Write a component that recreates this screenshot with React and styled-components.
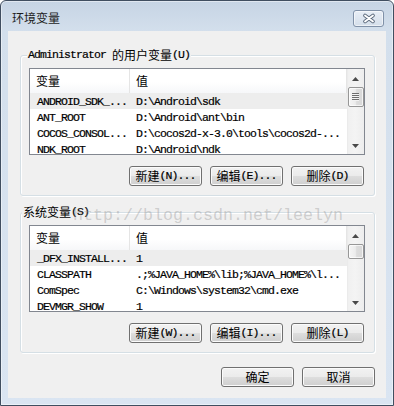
import React from 'react';
import styled, { createGlobalStyle } from 'styled-components';

const Global = createGlobalStyle`
  html, body { margin: 0; padding: 0; background: #ffffff; }
  body { width: 394px; height: 406px; overflow: hidden; }
  * { box-sizing: border-box; }
`;

const Window = styled.div`
  position: relative;
  width: 394px;
  height: 406px;
  border: 1px solid #404e60;
  border-radius: 6px 6px 0 0;
  background: linear-gradient(#c6d4e4 0px, #d3dfec 30px, #dae5f2 100%);
  box-shadow: inset 0 0 0 1px rgba(255, 255, 255, 0.45);
  display: flex;
  flex-direction: column;
  font-family: "Noto Sans CJK SC", sans-serif;
  font-size: 12px;
  color: #000;
  overflow: hidden;
`;

const TitleBar = styled.div`
  height: 30px;
  flex: none;
  display: flex;
  align-items: flex-start;
  justify-content: space-between;
  padding: 0 9px 0 11px;
`;

const Title = styled.div`
  margin-top: 9px;
  line-height: 16px;
  font-size: 12px;
  color: #1c1c1c;
`;

const CloseButton = styled.div`
  margin-top: 9px;
  width: 31px;
  height: 17px;
  border: 1px solid #8091a8;
  border-radius: 3px;
  background: linear-gradient(#e8eef6, #d4deea);
  box-shadow: inset 0 0 0 1px rgba(255, 255, 255, 0.55);
  display: flex;
  align-items: center;
  justify-content: center;
`;

const Client = styled.div`
  flex: 1;
  margin: 0 7px 7px;
  background: #f0f0f0;
  padding: 24px 11px 11px 12px;
  display: flex;
  flex-direction: column;
`;

const Group = styled.div`
  height: 141px;
  flex: none;
  margin-top: ${(p) => p.$gap || 0}px;
  border: 1px solid #d5dfe5;
  border-radius: 3px;
  box-shadow: inset 1px 1px 0 #ffffff, 1px 1px 0 #ffffff;
  padding: 0 9px 0 8px;
  display: flex;
  flex-direction: column;
`;

const GroupLabel = styled.div`
  align-self: flex-start;
  margin: -8px 0 0 ${(p) => p.$indent}px;
  padding: 0 1px;
  height: 14px;
  line-height: 14px;
  background: #f0f0f0;
  white-space: nowrap;
  display: flex;
  align-items: center;
`;

const Latin = styled.span`
  font-family: "Liberation Mono", monospace;
  font-size: 11.5px;
  letter-spacing: -0.9px;
  -webkit-text-stroke: 0.2px #000;
`;

const ListView = styled.div`
  margin-top: 6px;
  height: 87px;
  flex: none;
  border: 1px solid #828790;
  background: #ffffff;
  display: flex;
  overflow: hidden;
`;

const ListBody = styled.div`
  flex: 1;
  display: flex;
  flex-direction: column;
  overflow: hidden;
`;

const Header = styled.div`
  height: 24px;
  flex: none;
  display: flex;
  background: linear-gradient(#ffffff 0%, #ffffff 55%, #f6f7f9 100%);
  border-right: 1px solid #e5e5e5;
`;

const HeaderCell = styled.div`
  width: ${(p) => (p.$first ? '100px' : 'auto')};
  flex: ${(p) => (p.$first ? 'none' : '1')};
  padding-left: 6px;
  border-right: ${(p) => (p.$first ? '1px solid #e5e5e5' : 'none')};
  line-height: 24px;
  font-size: 12px;
  color: #000;
`;

const Row = styled.div`
  height: 16px;
  flex: none;
  display: flex;
  align-items: center;
  background: ${(p) => (p.$selected ? '#ededed' : 'transparent')};
  white-space: nowrap;
`;

const Cell = styled.div`
  width: ${(p) => (p.$first ? '100px' : 'auto')};
  flex: ${(p) => (p.$first ? 'none' : '1')};
  padding-left: ${(p) => (p.$first ? 7 : 6)}px;
  line-height: 16px;
  overflow: hidden;
`;

const ScrollBar = styled.div`
  width: 17px;
  flex: none;
  display: flex;
  flex-direction: column;
  background: linear-gradient(to right, #e6e6e6 0px, #f0f0f0 1px, #f4f4f4 8px, #eeeeee 16px);
`;

const ArrowButton = styled.div`
  height: 17px;
  flex: none;
  display: flex;
  align-items: center;
  justify-content: center;
  padding-top: ${(p) => (p.$up ? 2 : 0)}px;
`;

const Track = styled.div`
  flex: 1;
  display: flex;
  flex-direction: column;
  align-items: center;
`;

const Thumb = styled.div`
  margin-top: 1px;
  width: 16px;
  height: ${(p) => p.$size}px;
  border: 1px solid #979797;
  border-radius: 2px;
  background: linear-gradient(to right, #f5f5f5 0%, #ececec 45%, #dcdcdc 55%, #d8d8d8 100%);
  box-shadow: inset 0 0 0 1px rgba(255, 255, 255, 0.7);
  display: flex;
  align-items: center;
  justify-content: center;
`;

const Grip = styled.div`
  width: 7px;
  height: 8px;
  background: repeating-linear-gradient(#6d6d6d 0px, #6d6d6d 1px, #f2f2f2 1px, #f2f2f2 2px);
`;

const ButtonRow = styled.div`
  margin-top: ${(p) => p.$gap}px;
  padding-right: ${(p) => p.$pad || 0}px;
  display: flex;
  justify-content: flex-end;
  gap: 8px;
`;

const Button = styled.div`
  width: 73px;
  height: 20px;
  border: 1px solid #707070;
  border-radius: 3px;
  background: linear-gradient(#f2f2f2 0%, #ebebeb 48%, #dddddd 52%, #cfcfcf 100%);
  box-shadow: inset 0 0 0 1px #fbfbfb;
  display: flex;
  align-items: center;
  justify-content: center;
  white-space: nowrap;
  line-height: 16px;
  font-size: 12px;
  color: #000;
`;

const Watermark = styled.div`
  position: absolute;
  left: 72px;
  top: 206px;
  font-family: "Liberation Mono", monospace;
  font-size: 16.67px;
  line-height: 17px;
  color: rgba(150, 150, 150, 0.4);
  white-space: nowrap;
  pointer-events: none;
`;

const UpArrow = () => (
  <svg width="7" height="4" viewBox="0 0 7 4">
    <path d="M3.5 0 L7 4 L0 4 Z" fill="#4a4a4a" />
  </svg>
);

const DownArrow = () => (
  <svg width="7" height="4" viewBox="0 0 7 4">
    <path d="M0 0 L7 0 L3.5 4 Z" fill="#4a4a4a" />
  </svg>
);

const CloseGlyph = () => (
  <svg width="14" height="11" viewBox="0 0 14 11">
    <path d="M3 2.5 L11 8.5 M11 2.5 L3 8.5" stroke="#5d6b7e" strokeWidth="3.6" strokeLinecap="round" fill="none" />
    <path d="M3 2.5 L11 8.5 M11 2.5 L3 8.5" stroke="#ffffff" strokeWidth="1.8" strokeLinecap="round" fill="none" />
  </svg>
);

const VarList = ({ rows, thumb, grip }) => (
  <ListView>
    <ListBody>
      <Header>
        <HeaderCell $first>变量</HeaderCell>
        <HeaderCell>值</HeaderCell>
      </Header>
      {rows.map((r, i) => (
        <Row key={r[0]} $selected={i === 0}>
          <Cell $first><Latin>{r[0]}</Latin></Cell>
          <Cell><Latin>{r[1]}</Latin></Cell>
        </Row>
      ))}
    </ListBody>
    <ScrollBar>
      <ArrowButton $up><UpArrow /></ArrowButton>
      <Track>
        <Thumb $size={thumb}>{grip && <Grip />}</Thumb>
      </Track>
      <ArrowButton><DownArrow /></ArrowButton>
    </ScrollBar>
  </ListView>
);

const userRows = [
  ['ANDROID_SDK_...', 'D:\\Android\\sdk'],
  ['ANT_ROOT', 'D:\\Android\\ant\\bin'],
  ['COCOS_CONSOL...', 'D:\\cocos2d-x-3.0\\tools\\cocos2d-...'],
  ['NDK_ROOT', 'D:\\Android\\ndk'],
];

const sysRows = [
  ['_DFX_INSTALL...', '1'],
  ['CLASSPATH', '.;%JAVA_HOME%\\lib;%JAVA_HOME%\\l...'],
  ['ComSpec', 'C:\\Windows\\system32\\cmd.exe'],
  ['DEVMGR_SHOW', '1'],
];

export default function App() {
  return (
    <>
      <Global />
      <Window>
        <TitleBar>
          <Title>环境变量</Title>
          <CloseButton><CloseGlyph /></CloseButton>
        </TitleBar>
        <Client>
          <Group>
            <GroupLabel $indent={-2}>
              <Latin>Administrator&nbsp;</Latin>的用户变量<Latin>(U)</Latin>
            </GroupLabel>
            <VarList rows={userRows} thumb={20} grip />
            <ButtonRow $gap={11} $pad={1}>
              <Button>新建<Latin>(N)...</Latin></Button>
              <Button>编辑<Latin>(E)...</Latin></Button>
              <Button>删除<Latin>(D)</Latin></Button>
            </ButtonRow>
          </Group>
          <Group $gap={16}>
            <GroupLabel $indent={-7}>
              系统变量<Latin>(S)</Latin>
            </GroupLabel>
            <VarList rows={sysRows} thumb={15} />
            <ButtonRow $gap={11} $pad={1}>
              <Button>新建<Latin>(W)...</Latin></Button>
              <Button>编辑<Latin>(I)...</Latin></Button>
              <Button>删除<Latin>(L)</Latin></Button>
            </ButtonRow>
          </Group>
          <ButtonRow $gap={14}>
            <Button>确定</Button>
            <Button>取消</Button>
          </ButtonRow>
        </Client>
        <Watermark>http://blog.csdn.net/leelyn</Watermark>
      </Window>
    </>
  );
}
